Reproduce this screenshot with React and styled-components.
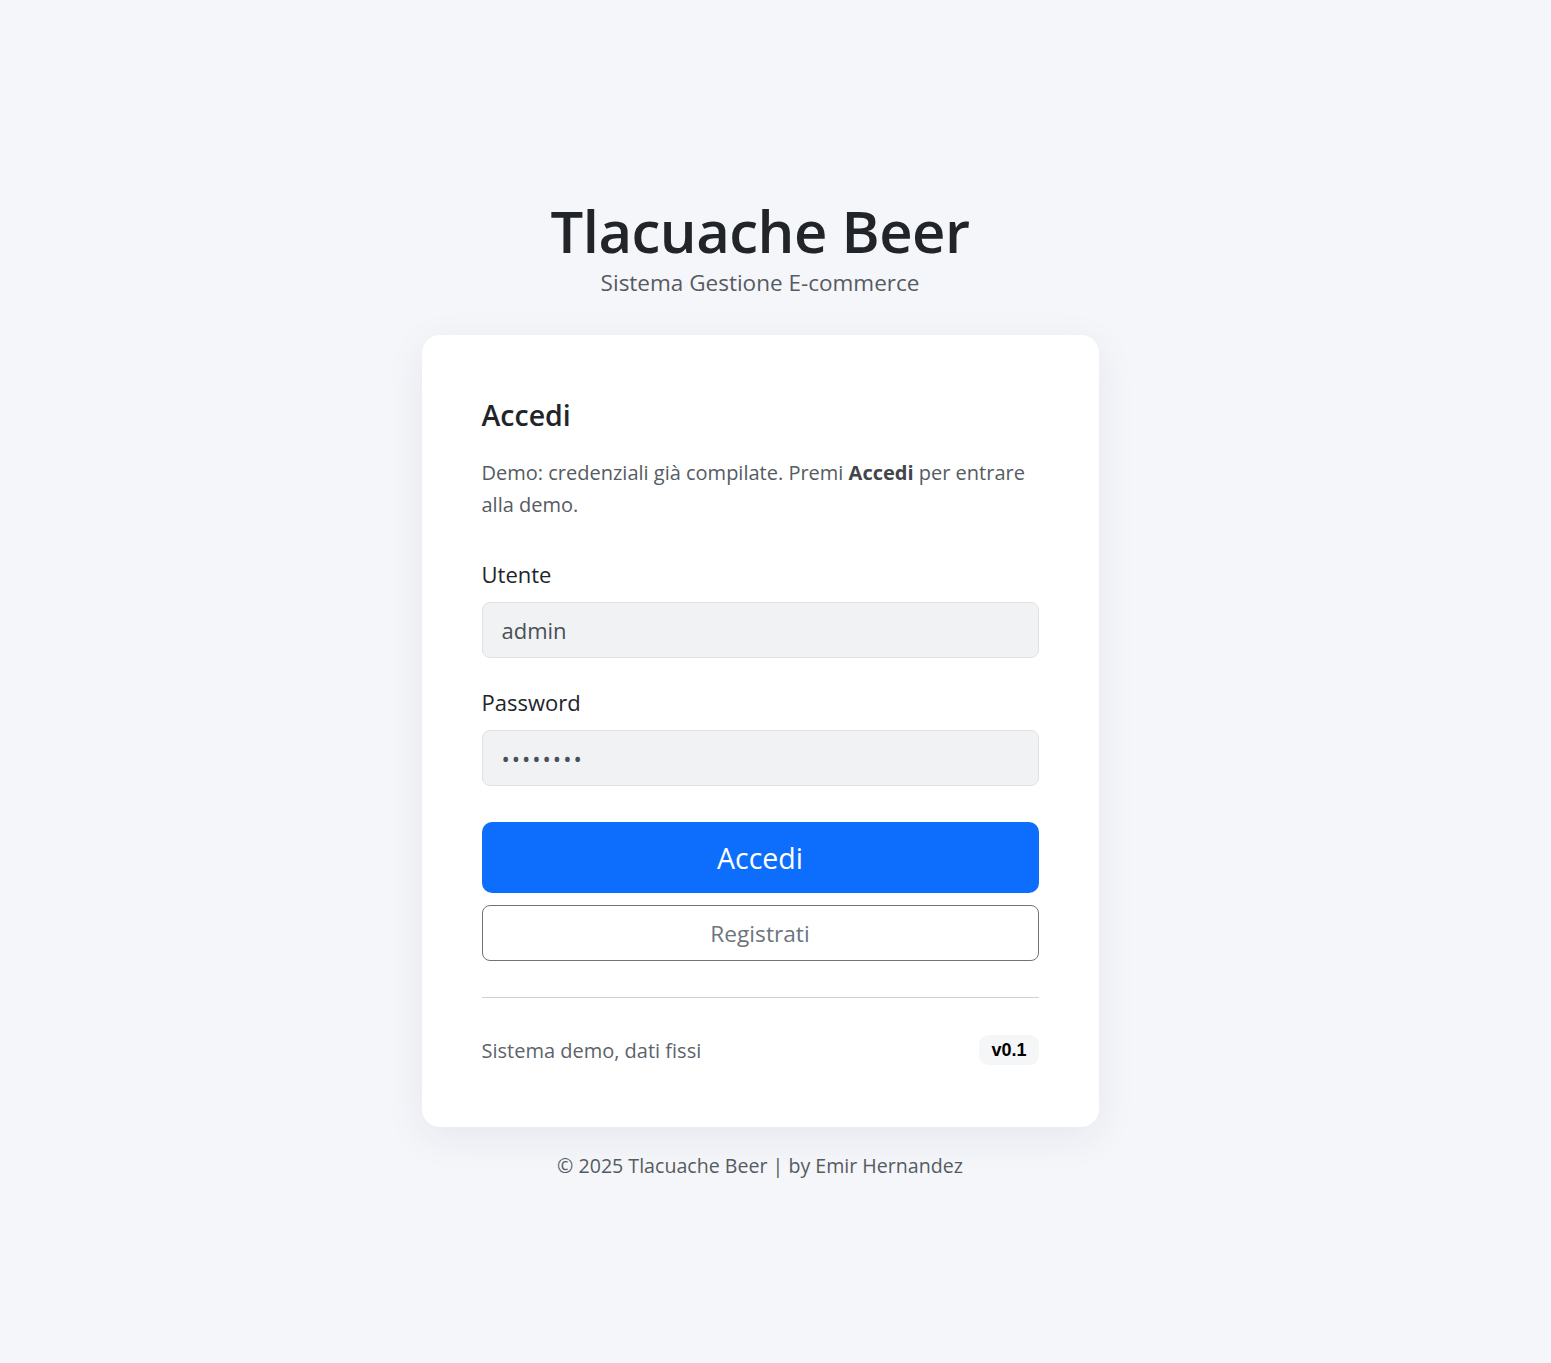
import styled, { createGlobalStyle } from "styled-components"

const GlobalStyle = createGlobalStyle`
  html, body {
    margin: 0;
    padding: 0;
    background: #f5f6fa;
  }
  body {
    font-family: "Open Sans", "Noto Sans", sans-serif;
    color: #212529;
  }
`

const Page = styled.div`
  min-height: 1363px;
  box-sizing: border-box;
  padding: 196px 31px 0 0;
  display: flex;
  flex-direction: column;
  align-items: center;
`

const Brand = styled.h1`
  margin: 0 0 3px;
  font-size: 58px;
  font-weight: 600;
  line-height: 70px;
  color: #212529;
  letter-spacing: -0.5px;
`

const Tagline = styled.p`
  margin: 0 0 38px;
  font-size: 22.5px;
  line-height: 28px;
  color: #555b62;
`

const Card = styled.div`
  width: 677px;
  box-sizing: border-box;
  background: #fff;
  border-radius: 18px;
  padding: 62px 60px 62px;
  box-shadow: 0 10px 40px rgba(30, 40, 70, 0.07);
  display: flex;
  flex-direction: column;
`

const CardTitle = styled.h2`
  margin: 0 0 24px;
  font-size: 28.5px;
  font-weight: 600;
  line-height: 36px;
  color: #212529;
`

const Note = styled.p`
  margin: 0 0 38px;
  font-size: 20px;
  line-height: 32px;
  color: #555b62;

  b {
    color: #41464b;
    font-weight: 700;
  }
`

const Field = styled.div`
  display: flex;
  flex-direction: column;
  gap: 13px;
  margin-bottom: 29px;
`

const Label = styled.label`
  font-size: 22px;
  line-height: 30px;
  color: #212529;
`

const Input = styled.input`
  height: 56px;
  box-sizing: border-box;
  border: 1px solid #dee2e6;
  border-radius: 8px;
  background: #f1f2f4;
  padding: 0 19px;
  font-family: inherit;
  font-size: 22px;
  color: #495057;
  outline: none;
  letter-spacing: ${p => (p.type === "password" ? "2px" : "0")};
`

const PrimaryButton = styled.button`
  margin-top: 7px;
  height: 71px;
  border: none;
  border-radius: 10px;
  background: #0d6efd;
  color: #fff;
  font-family: inherit;
  font-size: 28.5px;
  cursor: pointer;
`

const OutlineButton = styled.button`
  margin-top: 12px;
  height: 56px;
  border: 1px solid #6c757d;
  border-radius: 8px;
  background: #fff;
  color: #6c757d;
  font-family: inherit;
  font-size: 22.7px;
  cursor: pointer;
`

const Divider = styled.hr`
  margin: 36px 0 0;
  border: none;
  border-top: 1px solid #cfd1d4;
`

const Meta = styled.div`
  margin-top: 37px;
  display: flex;
  justify-content: space-between;
  align-items: center;
`

const MetaText = styled.span`
  font-size: 20px;
  color: #5c636a;
`

const Badge = styled.span`
  background: #f5f6f8;
  border-radius: 9px;
  padding: 4px 12px;
  font-family: "Liberation Sans", Arial, sans-serif;
  font-weight: 700;
  font-size: 18px;
  line-height: 22px;
  color: #000;
`

const Footer = styled.footer`
  margin-top: 25px;
  font-size: 19.6px;
  line-height: 28px;
  color: #555b62;
`

export default function App() {
  return (
    <>
      <GlobalStyle />
      <Page>
        <Brand>Tlacuache Beer</Brand>
        <Tagline>Sistema Gestione E-commerce</Tagline>
        <Card>
          <CardTitle>Accedi</CardTitle>
          <Note>
            Demo: credenziali già compilate. Premi <b>Accedi</b> per entrare alla demo.
          </Note>
          <Field>
            <Label htmlFor="user">Utente</Label>
            <Input id="user" type="text" defaultValue="admin" />
          </Field>
          <Field>
            <Label htmlFor="pass">Password</Label>
            <Input id="pass" type="password" defaultValue="password" />
          </Field>
          <PrimaryButton>Accedi</PrimaryButton>
          <OutlineButton>Registrati</OutlineButton>
          <Divider />
          <Meta>
            <MetaText>Sistema demo, dati fissi</MetaText>
            <Badge>v0.1</Badge>
          </Meta>
        </Card>
        <Footer>© 2025 Tlacuache Beer | by Emir Hernandez</Footer>
      </Page>
    </>
  )
}
